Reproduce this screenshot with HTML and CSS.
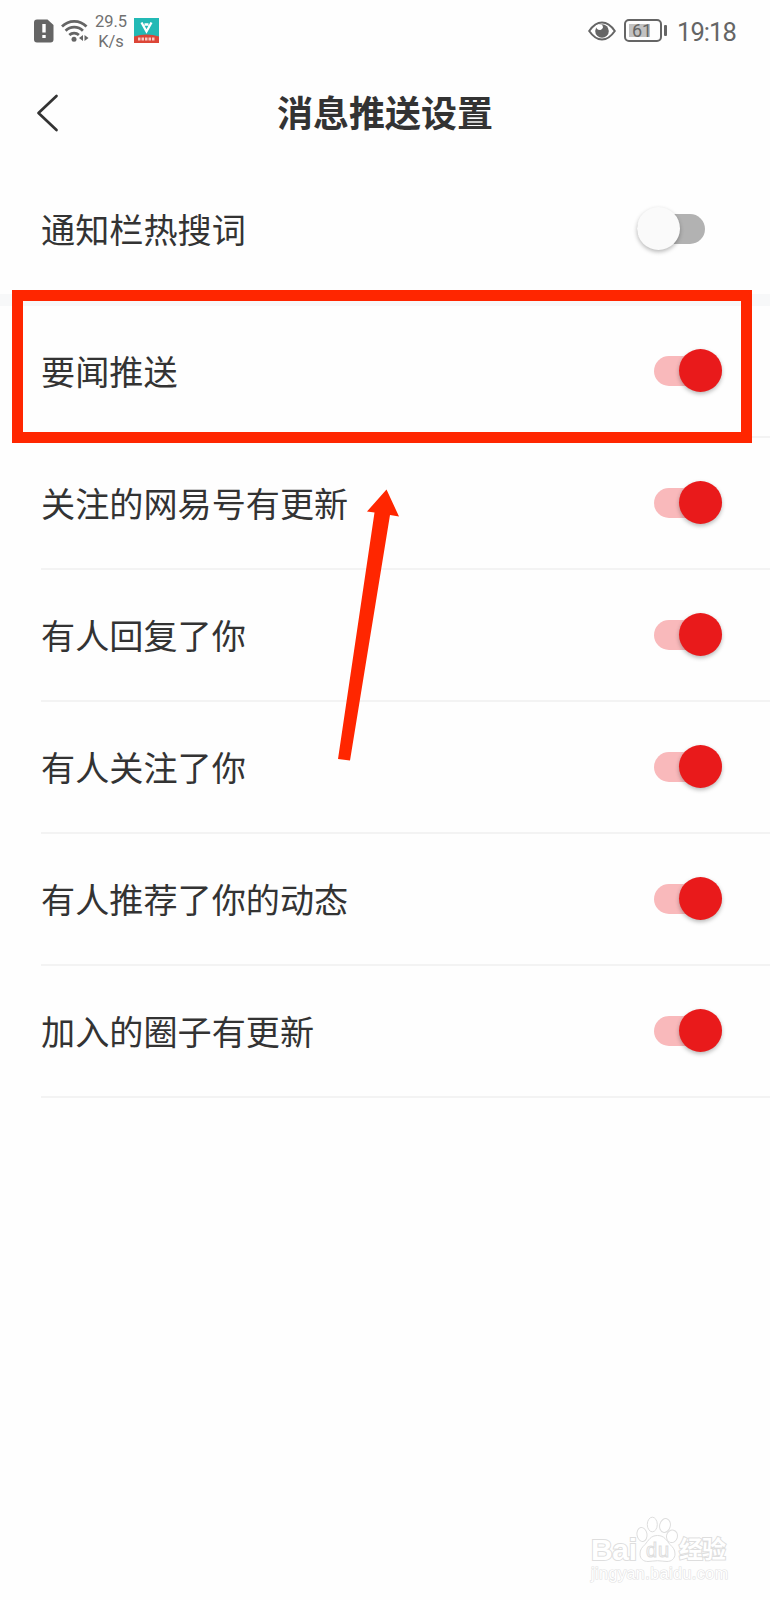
FILE: index.html
```
<!DOCTYPE html>
<html lang="zh-CN">
<head>
  <meta charset="UTF-8">
  <meta name="viewport" content="width=device-width, initial-scale=1.0">
  <title>消息推送设置</title>
  <link rel="stylesheet" href="styles.css">
</head>
<body>
  <div class="screen">
    <!-- Status bar -->
    <div class="status-bar">
      <div class="status-left">
        <svg class="icon-sim" width="20" height="24" viewBox="0 0 20 24">
          <path d="M3 .5h10.500L19.500 6v14.500a3 3 0 0 1-3 3H3a3 3 0 0 1-3-3v-17a3 3 0 0 1 3-3z" fill="#656565"/>
          <path d="M8.300 5h3.400v8.500H8.300zM8.300 16h3.400v3H8.300z" fill="#fff"/>
        </svg>
        <svg class="icon-wifi" width="28" height="24" viewBox="0 0 28 24">
          <g fill="none" stroke="#656565" stroke-width="2.700">
            <path d="M1 7.500a17 17 0 0 1 24.500 0"/>
            <path d="M4.600 11.800a12 12 0 0 1 17.300 0"/>
            <path d="M8.300 16a7 7 0 0 1 9.600 0"/>
          </g>
          <circle cx="13" cy="20.300" r="2.500" fill="#656565"/>
          <path d="M22 16v6l-4-3zM23.500 16v6l4-3z" fill="#656565"/>
        </svg>
        <div class="net-speed"><span>29.5</span><span>K/s</span></div>
        <svg class="icon-app" width="25" height="25" viewBox="0 0 25 25">
          <path d="M0 0h25v25H0z" fill="#22b9b5"/>
          <path d="M7.500 4.500l5 9 5-9M10.500 6.500h4" fill="none" stroke="#fff" stroke-width="2.300"/>
          <path d="M0 18.500q12.500-4 25 0V25H0z" fill="#dc4537"/>
          <path d="M4 21h17" stroke="#f6c9c3" stroke-width="3" stroke-dasharray="2.500 1"/>
        </svg>
      </div>
      <div class="status-right">
        <svg class="icon-eye" width="28" height="20" viewBox="0 0 28 20">
          <path d="M1.200 10Q7 1.500 14 1.500T26.800 10Q21 18.500 14 18.500T1.200 10z" fill="#fff" stroke="#656565" stroke-width="2"/>
          <circle cx="14" cy="10" r="6.800" fill="#656565"/>
          <path d="M8 4a4 4 0 0 0 4.500 5 3 3 0 0 0 1-5.500z" fill="#fff"/>
        </svg>
        <div class="battery"><span class="battery-level">61</span></div>
        <div class="battery-tip"></div>
        <span class="clock">19:18</span>
      </div>
    </div>

    <!-- Title bar -->
    <div class="header">
      <svg class="back" width="24" height="38" viewBox="0 0 24 38">
        <path d="M20.500 2L2.500 19l18 17" fill="none" stroke="#333" stroke-width="2.700" stroke-linecap="round" stroke-linejoin="round"/>
      </svg>
      <h1>消息推送设置</h1>
    </div>

    <div class="row row-first">
      <span>通知栏热搜词</span>
      <div class="switch off"></div>
    </div>
    <div class="band"></div>

    <!-- Push options -->
    <div class="list">
      <div class="row">
        <span>要闻推送</span>
        <div class="switch on"></div>
      </div>
      <div class="row">
        <span>关注的网易号有更新</span>
        <div class="switch on"></div>
      </div>
      <div class="row">
        <span>有人回复了你</span>
        <div class="switch on"></div>
      </div>
      <div class="row">
        <span>有人关注了你</span>
        <div class="switch on"></div>
      </div>
      <div class="row">
        <span>有人推荐了你的动态</span>
        <div class="switch on"></div>
      </div>
      <div class="row">
        <span>加入的圈子有更新</span>
        <div class="switch on"></div>
      </div>
    </div>

    <!-- Highlight box and arrow -->
    <div class="highlight"></div>
    <svg class="arrow" width="62" height="273" viewBox="0 0 62 273">
      <path d="M49.500 1.500L30 23.500l7.500 1L1 271l12 1.500L53 27l9 1.500z" fill="#ff2600"/>
    </svg>

    <svg class="watermark" width="146" height="72" viewBox="0 0 146 72">
      <g class="wm-shapes">
        <text class="wm-brand" x="1" y="47" textLength="46">Bai</text>
        <path d="M67.500 22.500c-7 0-9 5-12.500 9-3 3-5 5-5 9.500 0 5 3.500 7.500 8 7.500 3.500 0 6-.8 9.500-.8s6 .8 9.500.8c4.500 0 8-3 8-7.500s-2-6.500-5-9.500c-3.500-4-5.500-9-12.500-9z"/>
        <ellipse cx="52" cy="21.500" rx="5" ry="7" transform="rotate(-10 52 21.500)"/>
        <ellipse cx="62.300" cy="11.500" rx="5" ry="7.300"/>
        <ellipse cx="75" cy="12.500" rx="5.300" ry="7" transform="rotate(15 75 12.500)"/>
        <ellipse cx="82" cy="23.300" rx="5.500" ry="6.300" transform="rotate(15 82 23.300)"/>
        <text class="wm-du" x="56" y="44" textLength="23">du</text>
        <text class="wm-cn" x="89" y="45" textLength="47">经验</text>
      </g>
      <text class="wm-url" x="1" y="66" textLength="137">jingyan.baidu.com</text>
    </svg>
  </div>
</body>
</html>
```
FILE: styles.css
```
* {
  box-sizing: border-box;
}
body {
  margin: 0;
  background-color: #fefefe;
  color: #333;
  font-family: Roboto, "Noto Sans CJK SC", sans-serif;
}
.screen {
  position: relative;
  width: 770px;
  height: 1600px;
  overflow: hidden;
}

/* Status bar */
.status-bar {
  display: flex;
  justify-content: space-between;
  height: 61px;
  padding: 0 34px;
  color: #656565;
}
.status-left,
.status-right {
  display: flex;
  align-items: center;
}
.icon-wifi {
  margin-left: 7px;
}
.net-speed {
  display: flex;
  flex-direction: column;
  width: 34px;
  margin-left: 5px;
  margin-top: 2px;
  color: #707070;
  font-size: 16.5px;
  line-height: 19.5px;
  text-align: center;
}
.icon-app {
  margin-left: 6px;
}
.battery {
  width: 38px;
  height: 23px;
  margin-left: 8px;
  padding: 3px;
  border: 2px solid #656565;
  border-radius: 5px;
}
.battery-level {
  display: block;
  width: 21px;
  height: 13px;
  padding-left: 3px;
  background-color: #c2c2c2;
  font-size: 18px;
  line-height: 14px;
}
.battery-tip {
  width: 3px;
  height: 11px;
  margin-left: 2px;
  border-radius: 1px;
  background-color: #656565;
}
.clock {
  margin-left: 10px;
  padding-top: 2px;
  font-size: 25.5px;
  letter-spacing: -0.9px;
}

/* Title bar */
.header {
  display: grid;
  grid-template-columns: 60px 1fr 60px;
  align-items: center;
  height: 106px;
  padding: 0 36px 3px;
}
h1 {
  margin: 4px 0 0;
  font-size: 36px;
  font-weight: 700;
  line-height: 50px;
  text-align: center;
}

/* Rows */
.row {
  display: flex;
  flex: 1;
  align-items: center;
  justify-content: space-between;
  padding-right: 48px;
  border-bottom: 2px solid #f3f3f3;
  font-size: 34.150px;
}
.row span {
  margin-bottom: 1px;
}
.row-first {
  flex: none;
  height: 127px;
  margin-left: 41px;
  padding-right: 65px;
  padding-bottom: 4px;
  border-bottom: 0;
}
.row-first span {
  margin-bottom: 2px;
}
.band {
  height: 12px;
  background-color: #f7f8f9;
}
.list {
  display: flex;
  flex-direction: column;
  height: 791.5px;
  margin-left: 41px;
}

/* Switches */
.switch {
  display: flex;
  align-items: center;
  width: 68px;
  height: 30px;
  border-radius: 15px;
}
.switch::before {
  content: "";
  flex: none;
  width: 43px;
  height: 43px;
  border-radius: 50%;
  box-shadow: 0 2px 4px rgba(0, 0, 0, 0.28);
}
.switch.on {
  justify-content: flex-end;
  background-color: #f9b9bb;
}
.switch.on::before {
  background-color: #e91a1b;
}
.switch.off {
  background-color: #b2b2b2;
}
.switch.off::before {
  background-color: #fafafa;
}

/* Annotations */
.highlight {
  position: absolute;
  top: 290px;
  left: 12px;
  width: 740px;
  height: 153px;
  border: 11px solid #ff2600;
}
.arrow {
  position: absolute;
  top: 488px;
  left: 337px;
}
.watermark {
  position: absolute;
  top: 1513px;
  left: 590px;
  overflow: visible;
}
.wm-shapes {
  fill: #fff;
  stroke: #dedede;
  stroke-width: 1px;
}
.wm-brand,
.wm-cn {
  stroke-width: 2px;
  paint-order: stroke;
}
.wm-brand {
  font: bold 30px "Liberation Sans", sans-serif;
}
.wm-du {
  font: 20px "Liberation Sans", sans-serif;
}
.wm-cn {
  font: bold 24px "Noto Sans CJK SC", sans-serif;
}
.wm-url {
  font: 16px "Liberation Sans", sans-serif;
  fill: #fff;
  stroke: #e2e2e2;
  stroke-width: 1.2px;
  paint-order: stroke;
}
```
